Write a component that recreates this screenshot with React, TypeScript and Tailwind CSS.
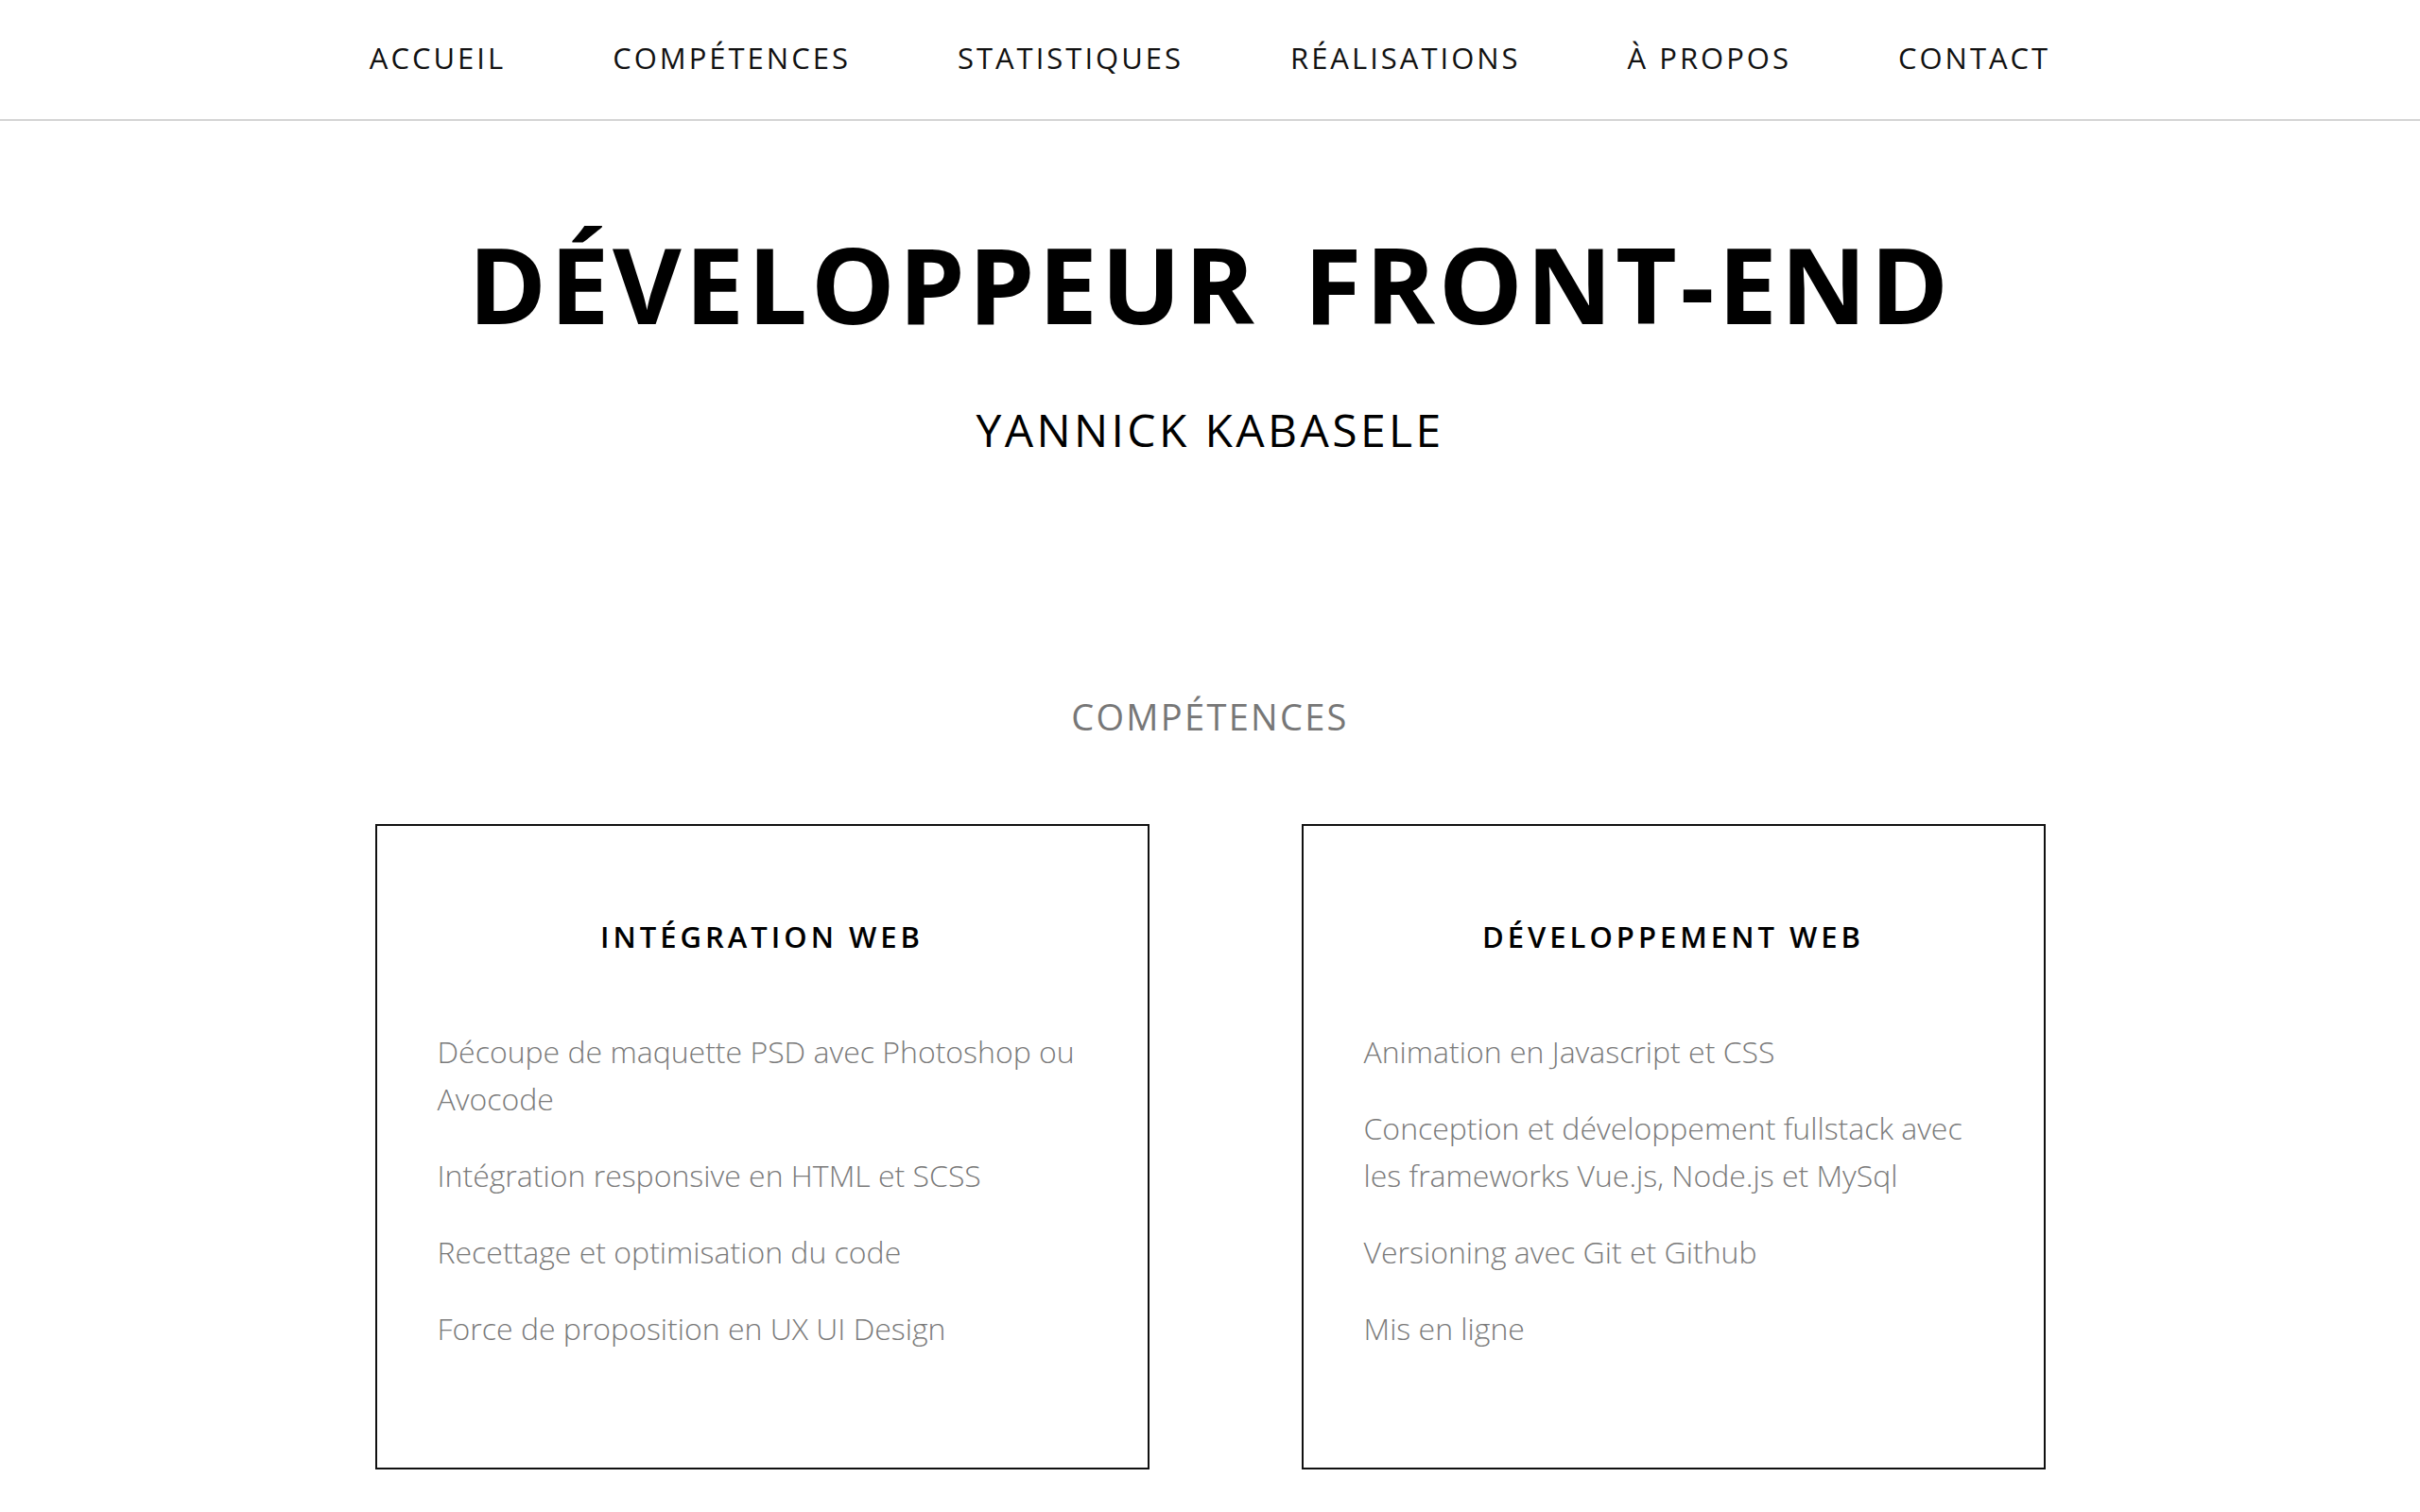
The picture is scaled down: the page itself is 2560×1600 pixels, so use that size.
import React from "react";

const navItems = ["ACCUEIL", "COMPÉTENCES", "STATISTIQUES", "RÉALISATIONS", "À PROPOS", "CONTACT"];

const cards = [
  {
    title: "INTÉGRATION WEB",
    width: "w-[819px]",
    items: [
      "Découpe de maquette PSD avec Photoshop ou Avocode",
      "Intégration responsive en HTML et SCSS",
      "Recettage et optimisation du code",
      "Force de proposition en UX UI Design",
    ],
  },
  {
    title: "DÉVELOPPEMENT WEB",
    width: "w-[787px]",
    items: [
      "Animation en Javascript et CSS",
      "Conception et développement fullstack avec les frameworks Vue.js, Node.js et MySql",
      "Versioning avec Git et Github",
      "Mis en ligne",
    ],
  },
];

export default function App() {
  return (
    <div className="min-h-screen bg-white font-['Open_Sans',sans-serif] text-black">
      <nav className="h-[128px] pb-[3px] border-b-2 border-[#d4d4d4] flex items-center justify-center gap-[113px]">
        {navItems.map((n) => (
          <span key={n} className="text-[31px] font-normal tracking-[3px] text-[#111]">
            {n}
          </span>
        ))}
      </nav>

      <header className="flex flex-col items-center pt-[96px]">
        <h1 className="text-[112px] font-bold tracking-[3.6px] leading-[152px] [word-spacing:16px]">
          DÉVELOPPEUR FRONT-END
        </h1>
        <p className="mt-[46px] text-[48px] font-normal tracking-[3.4px] leading-[65px]">
          YANNICK KABASELE
        </p>
      </header>

      <section className="flex flex-col items-center">
        <h2 className="mt-[245px] text-[38px] font-normal tracking-[2.3px] leading-[52px] text-[#777]">
          COMPÉTENCES
        </h2>
        <div className="mt-[88px] flex gap-[161px] items-stretch">
          {cards.map((c) => (
            <div key={c.title} className={`${c.width} border-2 border-[#111] px-[64px] pt-[96px] pb-[122px]`}>
              <h3 className="text-center text-[31px] font-semibold tracking-[4px] leading-[42px]">
                {c.title}
              </h3>
              <ul className="mt-[76px] flex flex-col gap-[31px]">
                {c.items.map((it) => (
                  <li key={it} className="text-[32px] font-light leading-[50px] text-[#7a7a7a]">
                    {it}
                  </li>
                ))}
              </ul>
            </div>
          ))}
        </div>
      </section>
    </div>
  );
}
